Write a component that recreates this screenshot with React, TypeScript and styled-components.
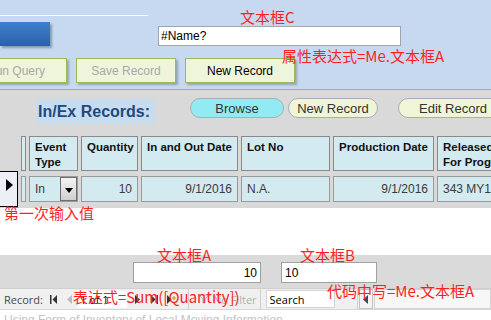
import styled, { createGlobalStyle } from 'styled-components';

const GlobalStyle = createGlobalStyle`
  html, body {
    margin: 0;
    padding: 0;
    background: #ffffff;
  }
  body {
    font-family: 'Liberation Sans', Arial, sans-serif;
  }
`;

type Column = {
  title: string;
  width: number;
  value: string;
  align?: 'left' | 'right';
  combo?: boolean;
};

const columns: Column[] = [
  { title: '', width: 5, value: '' },
  { title: 'Event Type', width: 49, value: 'In', combo: true },
  { title: 'Quantity', width: 57, value: '10', align: 'right' },
  { title: 'In and Out Date', width: 97, value: '9/1/2016', align: 'right' },
  { title: 'Lot No', width: 89, value: 'N.A.' },
  { title: 'Production Date', width: 101, value: '9/1/2016', align: 'right' },
  { title: 'Released\nFor Progress', width: 90, value: '343 MY1' },
];

const notes = [
  { text: '文本框C', x: 240, y: 8 },
  { text: '属性表达式=Me.文本框A', x: 282, y: 47 },
  { text: '第一次输入值', x: 4, y: 204 },
  { text: '文本框A', x: 157, y: 246 },
  { text: '文本框B', x: 300, y: 246 },
  { text: '表达式=Sum([Quantity])', x: 73, y: 288 },
  { text: '代码中写=Me.文本框A', x: 327, y: 282 },
];

const App = () => {
  return (
    <Screen>
      <GlobalStyle />
      <TopPanel>
        <TitleRule />
        <ControlRow>
          <BlueButton />
          <NameBox>#Name?</NameBox>
        </ControlRow>
        <ActionRow>
          <ActionButton $width={102} $offset={-35} $disabled>
            Run Query
          </ActionButton>
          <ActionButton $width={100} $disabled>
            Save Record
          </ActionButton>
          <ActionButton $width={110}>New Record</ActionButton>
        </ActionRow>
      </TopPanel>

      <RecordsPanel>
        <HeadRow>
          <SectionLabel>In/Ex Records:</SectionLabel>
          <Pill $width={94} $gap={35} $active>
            Browse
          </Pill>
          <Pill $width={90} $gap={4}>
            New Record
          </Pill>
          <Pill $width={110} $gap={20}>
            Edit Record
          </Pill>
        </HeadRow>

        <HeaderRow>
          {columns.map((c, i) => (
            <HeaderCell key={i} $width={c.width}>
              {c.title}
            </HeaderCell>
          ))}
        </HeaderRow>

        <DataRow>
          <RecordSelector>
            <svg width="7" height="12" viewBox="0 0 7 12">
              <path d="M0 0 L7 6 L0 12 Z" fill="#000" />
            </svg>
          </RecordSelector>
          <Cells>
            {columns.map((c, i) => (
              <DataCell key={i} $width={c.width} $align={c.align ?? 'left'}>
                <span>{c.value}</span>
                {c.combo && (
                  <ComboButton>
                    <svg width="8" height="5" viewBox="0 0 8 5">
                      <path d="M0 0 L8 0 L4 5 Z" fill="#000" />
                    </svg>
                  </ComboButton>
                )}
              </DataCell>
            ))}
          </Cells>
        </DataRow>
      </RecordsPanel>

      <Blank />

      <FooterPanel>
        <TotalBox $width={128} $gap={133} $align="right">
          10
        </TotalBox>
        <TotalBox $width={96} $gap={20} $align="left">
          10
        </TotalBox>
      </FooterPanel>

      <StatusBar>
        <StatusLabel>Record:</StatusLabel>
        <NavIcon $gap={7}>
          <svg width="7" height="9" viewBox="0 0 7 9">
            <rect x="0" y="0" width="1.5" height="9" fill="#333" />
            <path d="M7 0 L2.5 4.5 L7 9 Z" fill="#333" />
          </svg>
        </NavIcon>
        <NavIcon $gap={10}>
          <svg width="5" height="9" viewBox="0 0 5 9">
            <path d="M5 0 L0 4.5 L5 9 Z" fill="#bdbdbd" />
          </svg>
        </NavIcon>
        <PositionBox>1 of 1</PositionBox>
        <NavIcon $gap={8}>
          <svg width="5" height="9" viewBox="0 0 5 9">
            <path d="M0 0 L5 4.5 L0 9 Z" fill="#333" />
          </svg>
        </NavIcon>
        <NavIcon $gap={11}>
          <svg width="7" height="9" viewBox="0 0 7 9">
            <path d="M0 0 L4.5 4.5 L0 9 Z" fill="#333" />
            <rect x="5.5" y="0" width="1.5" height="9" fill="#333" />
          </svg>
        </NavIcon>
        <NavIcon $gap={9}>
          <svg width="9" height="9" viewBox="0 0 9 9">
            <path d="M0 0 L4.5 4.5 L0 9 Z" fill="#333" />
            <path d="M7 1 L7 5 M5 3 L9 3" stroke="#c9a000" strokeWidth="1.2" />
          </svg>
        </NavIcon>
        <Divider $gap={12} />
        <FilterInfo>
          <svg width="10" height="10" viewBox="0 0 10 10">
            <path d="M0 1 L10 1 L6 5 L6 9 L4 9 L4 5 Z" fill="none" stroke="#b5b5b5" />
          </svg>
          No Filter
        </FilterInfo>
        <Divider $gap={3} />
        <SearchBox>Search</SearchBox>
        <Divider $gap={22} />
        <ScrollArrow>
          <svg width="5" height="9" viewBox="0 0 5 9">
            <path d="M5 0 L0 4.5 L5 9 Z" fill="#3c4a5a" />
          </svg>
        </ScrollArrow>
        <ScrollTrack />
      </StatusBar>

      <BottomNote>Using Form of Inventory of Local Moving Information</BottomNote>

      {notes.map((n, i) => (
        <Note key={i} $x={n.x} $y={n.y}>
          {n.text}
        </Note>
      ))}
    </Screen>
  );
};

export default App;

const Screen = styled.div`
  position: relative;
  width: 491px;
  height: 320px;
  overflow: hidden;
  background: #ffffff;
  display: flex;
  flex-direction: column;
`;

const TopPanel = styled.div`
  flex: none;
  height: 90px;
  box-sizing: border-box;
  background: #c6d9f0;
  border-bottom: 1px solid #a6a6a6;
`;

const TitleRule = styled.div`
  width: 148px;
  height: 15px;
  border-bottom: 1px solid #ffffff;
`;

const ControlRow = styled.div`
  display: flex;
  align-items: flex-start;
  margin-top: 6px;
`;

const BlueButton = styled.div`
  width: 50px;
  height: 24px;
  background: linear-gradient(#3f80cc, #2b62aa);
  box-shadow: 2px 2px 2px rgba(60, 80, 110, 0.45);
`;

const NameBox = styled.div`
  width: 243px;
  height: 20px;
  margin: 4px 0 0 108px;
  box-sizing: border-box;
  border: 1px solid #a5a5a5;
  background: #ffffff;
  padding: 2px 2px;
  font-size: 12px;
  line-height: 15px;
  color: #000;
`;

const ActionRow = styled.div`
  display: flex;
  gap: 9px;
  margin-top: 12px;
`;

const ActionButton = styled.div<{ $width: number; $offset?: number; $disabled?: boolean }>`
  flex: none;
  width: ${(p) => p.$width}px;
  height: 25px;
  margin-left: ${(p) => p.$offset ?? 0}px;
  box-sizing: border-box;
  border: 1px solid #9bbb59;
  background: #eef5da;
  box-shadow: 2px 2px 2px rgba(90, 100, 110, 0.45);
  display: flex;
  align-items: center;
  justify-content: center;
  font-size: 12px;
  color: ${(p) => (p.$disabled ? '#a9a9a9' : '#000000')};
`;

const RecordsPanel = styled.div`
  flex: none;
  height: 118px;
  background: #d9d9d9;
  display: flex;
  flex-direction: column;
`;

const HeadRow = styled.div`
  display: flex;
  align-items: flex-start;
  margin-top: 8px;
  height: 26px;
`;

const SectionLabel = styled.div`
  flex: none;
  width: 119px;
  height: 25px;
  margin: 1px 0 0 36px;
  box-sizing: border-box;
  padding-left: 2px;
  background: #c8dcf0;
  display: flex;
  align-items: center;
  font-size: 16px;
  font-weight: bold;
  color: #1f497d;
`;

const Pill = styled.div<{ $width: number; $gap: number; $active?: boolean }>`
  flex: none;
  width: ${(p) => p.$width}px;
  height: 20px;
  margin-left: ${(p) => p.$gap}px;
  box-sizing: border-box;
  border: 1px solid #a3b0b8;
  border-radius: 10px;
  background: ${(p) => (p.$active ? '#92ebf2' : '#eff5d6')};
  display: flex;
  align-items: center;
  justify-content: center;
  font-size: 13px;
  color: #333333;
`;

const HeaderRow = styled.div`
  display: flex;
  gap: 3px;
  margin-top: 12px;
  padding-left: 21px;
`;

const HeaderCell = styled.div<{ $width: number }>`
  flex: none;
  width: ${(p) => p.$width}px;
  height: 35px;
  box-sizing: border-box;
  border: 1px solid #8a8a8a;
  background: #d2eaf0;
  padding: 3px 2px 0 ${(p) => (p.$width > 10 ? 5 : 0)}px;
  overflow: hidden;
  white-space: pre-line;
  font-size: 11.5px;
  font-weight: bold;
  line-height: 15px;
  color: #111111;
`;

const DataRow = styled.div`
  display: flex;
  align-items: center;
  height: 36px;
  gap: 3px;
`;

const RecordSelector = styled.div`
  flex: none;
  width: 18px;
  height: 36px;
  box-sizing: border-box;
  border: 1px solid #000000;
  border-left: none;
  background: #eceff5;
  padding: 5px 0 0 6px;
`;

const Cells = styled.div`
  display: flex;
  gap: 3px;
`;

const DataCell = styled.div<{ $width: number; $align: 'left' | 'right' }>`
  position: relative;
  flex: none;
  width: ${(p) => p.$width}px;
  height: 26px;
  box-sizing: border-box;
  border: 1px solid #9a9a9a;
  background: #d2eaf0;
  padding: 0 ${(p) => (p.$width > 10 ? 5 : 0)}px;
  display: flex;
  align-items: center;
  justify-content: ${(p) => (p.$align === 'right' ? 'flex-end' : 'flex-start')};
  overflow: hidden;
  white-space: nowrap;
  font-size: 12px;
  color: #3a3a3a;
`;

const ComboButton = styled.div`
  position: absolute;
  right: 0;
  top: 0;
  width: 17px;
  height: 24px;
  box-sizing: border-box;
  border: 1px solid #6e6e6e;
  background: linear-gradient(#f4f4f4, #cfcfcf);
  display: flex;
  align-items: center;
  justify-content: center;
  padding-top: 3px;
`;

const Blank = styled.div`
  flex: none;
  height: 47px;
  background: #ffffff;
`;

const FooterPanel = styled.div`
  flex: none;
  height: 33px;
  box-sizing: border-box;
  padding-top: 7px;
  background: #dadada;
  display: flex;
  align-items: flex-start;
`;

const TotalBox = styled.div<{ $width: number; $gap: number; $align: 'left' | 'right' }>`
  flex: none;
  width: ${(p) => p.$width}px;
  height: 21px;
  margin-left: ${(p) => p.$gap}px;
  box-sizing: border-box;
  border: 1px solid #a0a0a0;
  background: #ffffff;
  padding: 0 3px;
  display: flex;
  align-items: center;
  justify-content: ${(p) => (p.$align === 'right' ? 'flex-end' : 'flex-start')};
  font-size: 12px;
  color: #000;
`;

const StatusBar = styled.div`
  flex: none;
  height: 22px;
  box-sizing: border-box;
  border-top: 1px solid #cfcfcf;
  border-bottom: 1px solid #d6d6d6;
  background: #f0f0f0;
  display: flex;
  align-items: center;
  font-family: 'Open Sans', 'Noto Sans', sans-serif;
  font-size: 11px;
`;

const StatusLabel = styled.span`
  margin-left: 4px;
  color: #4a4a4a;
`;

const NavIcon = styled.span<{ $gap: number }>`
  display: flex;
  align-items: center;
  margin-left: ${(p) => p.$gap}px;
`;

const PositionBox = styled.div`
  width: 50px;
  height: 17px;
  margin-left: 5px;
  box-sizing: border-box;
  background: #ffffff;
  padding-left: 3px;
  display: flex;
  align-items: center;
  color: #000;
`;

const Divider = styled.span<{ $gap: number }>`
  width: 1px;
  height: 20px;
  margin-left: ${(p) => p.$gap}px;
  background: #d0d0d0;
`;

const FilterInfo = styled.span`
  display: flex;
  align-items: center;
  gap: 4px;
  margin-left: 10px;
  color: #b0b0b0;
`;

const SearchBox = styled.div`
  width: 69px;
  height: 18px;
  margin-left: 5px;
  box-sizing: border-box;
  border: 1px solid #d4d4d4;
  background: #ffffff;
  padding-left: 3px;
  display: flex;
  align-items: center;
  color: #000;
`;

const ScrollArrow = styled.div`
  width: 14px;
  height: 20px;
  margin-left: 1px;
  box-sizing: border-box;
  border: 1px solid #c4c4c4;
  background: #f4f4f4;
  display: flex;
  align-items: center;
  justify-content: center;
`;

const ScrollTrack = styled.div`
  flex: 1;
  height: 20px;
  margin-left: 1px;
  box-sizing: border-box;
  border: 1px solid #d4d4d4;
  background: #f7f7f7;
`;

const BottomNote = styled.div`
  flex: none;
  padding: 3px 0 0 4px;
  font-size: 12px;
  color: #c4c4c4;
  white-space: nowrap;
`;

const Note = styled.span<{ $x: number; $y: number }>`
  position: absolute;
  left: ${(p) => p.$x}px;
  top: ${(p) => p.$y}px;
  font-family: 'Noto Sans CJK SC', 'Noto Sans', sans-serif;
  font-size: 15px;
  line-height: 17px;
  color: #ff1f1f;
  white-space: nowrap;
  pointer-events: none;
`;
